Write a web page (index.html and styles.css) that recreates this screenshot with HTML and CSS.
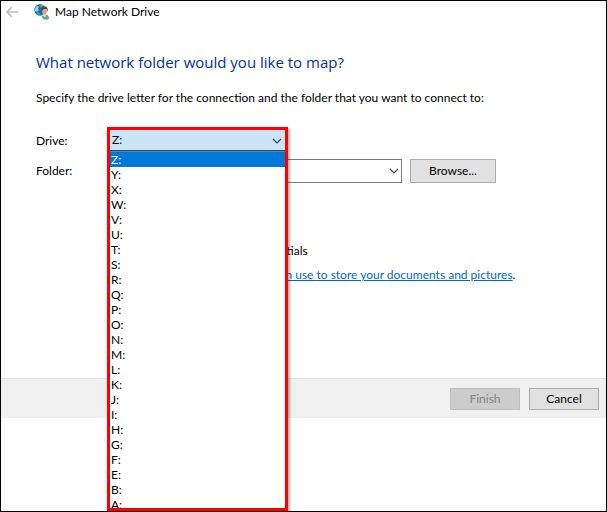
FILE: index.html
```
<!DOCTYPE html>
<html lang="en">

<head>
    <meta charset="UTF-8">
    <meta name="viewport" content="width=device-width, initial-scale=1">
    <title>Map Network Drive</title>
    <link rel="stylesheet" href="styles.css">
</head>

<body>
    <div class="window">
        <header class="titlebar">
            <button class="back" type="button" aria-label="Back" disabled>
                <svg width="12" height="12" viewBox="0 0 12 12">
                    <path d="M12 6H1M6 1L1 6l5 5" fill="none" stroke="#bcbcbc" stroke-width="1.6"/>
                </svg>
            </button>
            <svg class="app-icon" width="16" height="16" viewBox="0 0 16 16">
                <circle cx="6" cy="6" r="5.700" fill="#1c63c4"/>
                <path d="M1 5a6 6 0 0 1 2-3l2 1-1 2 1 1-2 2-2-1z" fill="#8fd4f6"/>
                <path d="M5 1c2-1 4 0 5 1L8 4 6 3zM3 8l3 1 1 2.500-2 0-2-2z" fill="#3fb149"/>
                <path d="M7.500 12.500l3-2 3 .5 2 3-2 1.800-4-.3z" fill="#66ab8c"/>
                <path d="M8.500 10.500l2.500 3 1-3z" fill="#e6eee6"/>
                <ellipse cx="10.500" cy="7.200" rx="2.300" ry="3.300" fill="#d9a77c"/>
                <path d="M7.800 7C7 3.500 9 2.500 10.500 2.500s4 .5 3 5.500L12.500 5 9.500 5z" fill="#5a4028"/>
            </svg>
            <span>Map Network Drive</span>
        </header>

        <form>
            <main>
                <h1>What network folder would you like to map?</h1>
                <p class="intro">Specify the drive letter for the connection and the folder that you want to connect to:</p>

                <div class="row">
                    <label for="drive">Drive:</label>
                    <div class="drive">
                        <div class="picker">
                            <div class="combo">
                                <select id="drive">
                                    <option>Z:</option>
                                </select>
                                <svg class="chevron" width="10" height="6" viewBox="0 0 10 6">
                                    <path d="M1 1l4 4 4-4" fill="none" stroke="#444" stroke-width="1.2"/>
                                </svg>
                            </div>
                            <ul class="letters" role="listbox" aria-label="Drive letters">
                                <li class="selected" role="option" aria-selected="true">Z:</li>
                                <li role="option">Y:</li>
                                <li role="option">X:</li>
                                <li role="option">W:</li>
                                <li role="option">V:</li>
                                <li role="option">U:</li>
                                <li role="option">T:</li>
                                <li role="option">S:</li>
                                <li role="option">R:</li>
                                <li role="option">Q:</li>
                                <li role="option">P:</li>
                                <li role="option">O:</li>
                                <li role="option">N:</li>
                                <li role="option">M:</li>
                                <li role="option">L:</li>
                                <li role="option">K:</li>
                                <li role="option">J:</li>
                                <li role="option">I:</li>
                                <li role="option">H:</li>
                                <li role="option">G:</li>
                                <li role="option">F:</li>
                                <li role="option">E:</li>
                                <li role="option">B:</li>
                                <li role="option">A:</li>
                            </ul>
                        </div>
                    </div>
                </div>

                <div class="row">
                    <label for="folder">Folder:</label>
                    <div class="combo folder">
                        <input id="folder" type="text">
                        <svg class="chevron" width="10" height="6" viewBox="0 0 10 6">
                            <path d="M1 1l4 4 4-4" fill="none" stroke="#444" stroke-width="1.2"/>
                        </svg>
                    </div>
                    <button class="btn browse" type="button">Browse...</button>
                </div>

                <div class="options">
                    <label class="check"><input type="checkbox"> Connect using different credentials</label>
                    <p class="web"><a href="#">Connect to a Web site that you can use to store your documents and pictures</a>.</p>
                </div>
            </main>

            <footer>
                <button class="btn" type="submit" disabled>Finish</button>
                <button class="btn" type="button">Cancel</button>
            </footer>
        </form>
    </div>
</body>

</html>
```

FILE: styles.css
```
* {
    box-sizing: border-box;
}

body {
    margin: 0;
    background: #fff;
    color: #000;
    font: 12px/16px Lato, "Open Sans", sans-serif;
}

button,
input,
select {
    font: inherit;
    color: inherit;
}

h1,
p,
ul {
    margin: 0;
    padding: 0;
}

.window {
    position: relative;
    min-height: 100vh;
    border: 1px solid #000;
    overflow: hidden;
}

.titlebar {
    display: flex;
    align-items: center;
    height: 22px;
    padding-left: 5px;
}

.back {
    display: flex;
    padding: 0;
    border: 0;
    background: none;
}

.app-icon {
    margin: 0 5px 0 16px;
}

main {
    height: 355px;
    padding: 27px 35px 0;
}

h1 {
    color: #003399;
    font-family: "Open Sans", sans-serif;
    font-size: 15px;
    font-weight: normal;
    line-height: 24px;
}

.intro {
    margin: 16px 0 23px;
    white-space: nowrap;
}

.row {
    display: flex;
    align-items: center;
    height: 24px;
    margin-bottom: 6px;
}

.row > label {
    width: 71px;
}

.drive {
    position: relative;
    width: 181px;
    height: 24px;
}

/* open drop-down, lies over the rest of the dialog */
.picker {
    position: absolute;
    top: -2px;
    left: 0;
    z-index: 1;
    width: 181px;
    border: 3px solid #f00;
    background: #fff;
    box-shadow: 2px 2px 2px rgba(0, 0, 0, 0.3);
}

.combo {
    display: flex;
    align-items: center;
    position: relative;
}

.combo select,
.combo input {
    width: 100%;
    height: 24px;
    padding: 0 2px;
    border: 1px solid #7a7a7a;
    border-radius: 0;
    background: #fff;
    appearance: none;
    outline: 0;
}

.combo select {
    height: 21px;
    border: 0;
    border-bottom: 1px solid #005499;
    background: #cce4f7;
}

.chevron {
    position: absolute;
    right: 3px;
}

.letters {
    height: 357px;
    border-top: 1px solid #7a7a7a;
    overflow: hidden;
    list-style: none;
    line-height: 15px;
}

.letters li {
    padding-left: 1px;
}

.letters .selected {
    background: #0078d7;
    color: #fff;
}

.folder {
    width: 295px;
}

.btn {
    width: 70px;
    height: 22px;
    padding: 0;
    border: 1px solid #adadad;
    background: #e1e1e1;
}

.btn:disabled {
    border-color: #bfbfbf;
    background: #ccc;
    color: #838383;
}

.browse {
    width: 86px;
    height: 24px;
    margin-left: 8px;
}

.options {
    margin: 60px 0 0 71px;
    white-space: nowrap;
}

.check {
    display: flex;
    align-items: center;
}

.check input {
    width: 13px;
    height: 13px;
    margin: 0 4px 0 0;
}

.web {
    margin-top: 8px;
}

a {
    color: #0066cc;
}

footer {
    display: flex;
    justify-content: flex-end;
    gap: 9px;
    height: 40px;
    padding: 9px 7px;
    border-top: 1px solid #dfdfdf;
    background: #f0f0f0;
}
```
